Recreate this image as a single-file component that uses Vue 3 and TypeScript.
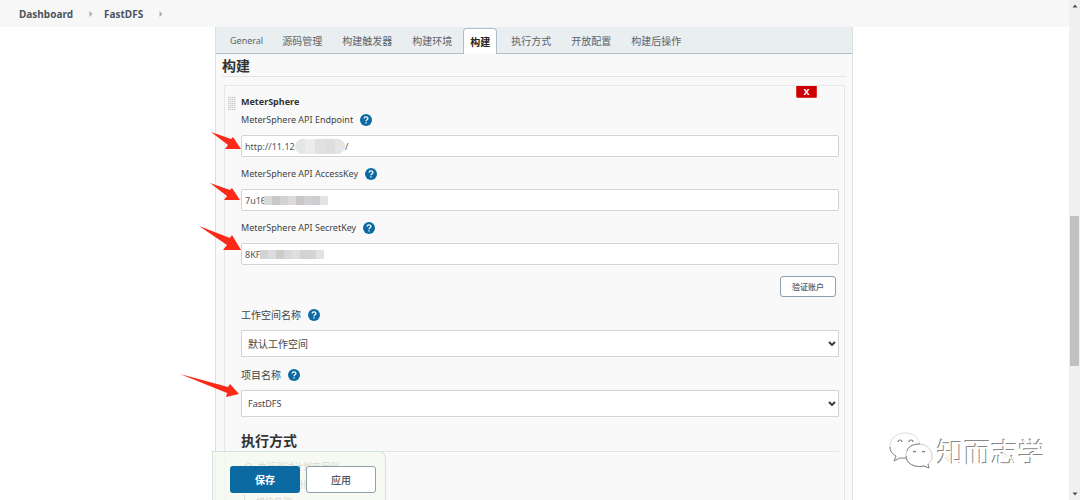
<script setup lang="ts">
import { ref } from 'vue'

interface Tab { label: string; kind?: string }
interface Credential { id: string; label: string; value: string; blocks: string[]; tail: string }

const crumbs: string[] = ['Dashboard', 'FastDFS']

const tabs: Tab[] = [
  { label: 'General', kind: 'latin' },
  { label: '源码管理' },
  { label: '构建触发器' },
  { label: '构建环境' },
  { label: '构建', kind: 'active' },
  { label: '执行方式' },
  { label: '开放配置' },
  { label: '构建后操作' },
]

const credentials = ref<Credential[]>([
  { id: 'endpoint', label: 'MeterSphere API Endpoint', value: 'http://11.12', tail: '/', blocks: ['#e6e6e6', '#ececec', '#e2e0e0', '#dedede', '#e5e5e6'] },
  { id: 'access', label: 'MeterSphere API AccessKey', value: '7u16', tail: '', blocks: ['#d9d9dc', '#c9c7c8', '#d0d2d6', '#dedad9', '#c9c6c8', '#d2d0d4', '#cecdcf', '#e3e3e6'] },
  { id: 'secret', label: 'MeterSphere API SecretKey', value: '8KF', tail: '', blocks: ['#d3d3d3', '#dcdcdf', '#cfcbc9', '#d8d8dc', '#dedede', '#d2d4d4', '#d6d3d6', '#e2e2e6'] },
])

const workspace = ref('默认工作空间')
const project = ref('FastDFS')
const mode = ref('')
</script>

<template>
  <div class="screen">
    <div class="page">
      <nav class="crumbs">
        <template v-for="c in crumbs" :key="c">
          <a href="#" class="crumb">{{ c }}</a>
          <svg class="sep" viewBox="0 0 4 6"><path d="M0.5 0 3.5 3 0.5 6Z" fill="#a9adb0" /></svg>
        </template>
      </nav>

      <main class="panel">
        <nav class="tabs">
          <a v-for="t in tabs" :key="t.label" href="#" class="tab" :class="t.kind">{{ t.label }}</a>
        </nav>

        <div class="body">
          <h2 class="heading">构建</h2>

          <section class="step">
            <span class="grip"></span>
            <button type="button" class="remove">X</button>
            <h3 class="title">MeterSphere</h3>

            <div v-for="f in credentials" :key="f.id" class="field">
              <div class="caption">
                <label :for="f.id">{{ f.label }}</label>
                <button type="button" class="help" aria-label="?"><svg viewBox="0 0 12 12"><circle cx="6" cy="6" r="6" fill="#0b6aa2" /><path d="M4.1 4.6C4.1 2.3 7.9 2.3 7.9 4.5 7.9 5.8 6 5.8 6 7.2M6 8.3V9.5" fill="none" stroke="#fff" stroke-width="1.3" /></svg></button>
              </div>
              <div class="control">
                <input :id="f.id" v-model="f.value" type="text" class="text" />
                <span class="mask" :class="f.id">
                  <span class="mosaic"><i v-for="(b, n) in f.blocks" :key="n" :style="{ background: b }"></i></span>
                  <span v-if="f.tail" class="tail">{{ f.tail }}</span>
                </span>
                <svg v-if="f.id === 'secret'" class="arrow to-secret" viewBox="0 0 42 25"><path d="M0 0 31 12 33 9 42 24 24 24 28 19Z" fill="#fc2818" /></svg>
                <svg v-else class="arrow" :class="'to-' + f.id" viewBox="0 0 30 18"><path d="M0 0 20 7 22 5 30 17 14 17 17 13Z" fill="#fc2818" /></svg>
              </div>
            </div>

            <div class="verify">
              <button type="button" class="outline small">验证账户</button>
            </div>

            <div class="field choose">
              <div class="caption">
                <label for="workspace">工作空间名称</label>
                <button type="button" class="help" aria-label="?"><svg viewBox="0 0 12 12"><circle cx="6" cy="6" r="6" fill="#0b6aa2" /><path d="M4.1 4.6C4.1 2.3 7.9 2.3 7.9 4.5 7.9 5.8 6 5.8 6 7.2M6 8.3V9.5" fill="none" stroke="#fff" stroke-width="1.3" /></svg></button>
              </div>
              <div class="control">
                <select id="workspace" v-model="workspace" class="select"><option>默认工作空间</option></select>
                <svg class="chevron" viewBox="0 0 8 6"><path d="M1 1 4 4 7 1" fill="none" stroke="#333" stroke-width="1.8" /></svg>
              </div>
            </div>

            <div class="field choose">
              <div class="caption">
                <label for="project">项目名称</label>
                <button type="button" class="help" aria-label="?"><svg viewBox="0 0 12 12"><circle cx="6" cy="6" r="6" fill="#0b6aa2" /><path d="M4.1 4.6C4.1 2.3 7.9 2.3 7.9 4.5 7.9 5.8 6 5.8 6 7.2M6 8.3V9.5" fill="none" stroke="#fff" stroke-width="1.3" /></svg></button>
              </div>
              <div class="control">
                <select id="project" v-model="project" class="select"><option>FastDFS</option></select>
                <svg class="chevron" viewBox="0 0 8 6"><path d="M1 1 4 4 7 1" fill="none" stroke="#333" stroke-width="1.8" /></svg>
                <svg class="arrow to-project" viewBox="0 0 59 23"><path d="M0 0 48 13 50 10 59 20 46 23 47 19Z" fill="#fc2818" /></svg>
              </div>
            </div>

            <h2 class="heading sub">执行方式</h2>
            <label class="choice"><input v-model="mode" type="radio" name="mode" value="plan" />执行测试计划定用例</label>
            <label class="choice"><input v-model="mode" type="radio" name="mode" value="module" />执行模块用例</label>
            <div class="nested">模块名称</div>
          </section>
        </div>
      </main>

      <div class="actions">
        <button type="button" class="primary">保存</button>
        <button type="button" class="outline">应用</button>
      </div>

      <div class="watermark">
        <svg class="wechat" viewBox="0 0 44 38">
          <g fill="#fff" stroke-width="1">
            <path d="M16 1C7 1 1 7 1 14c0 5 2 8 6 10l-2 5 6-3c9 2 20-2 20-12C31 6 24 1 16 1Z" stroke="#dcdcdc" />
            <path d="M1 15c0 4 2 7 6 9l-2 5 6-3 6 0" stroke="#8c8c8c" fill="none" />
            <path d="M30 12c-8 0-13 5-13 11 0 9 9 13 18 11l5 2-1-4c3-2 4-5 4-8 0-7-6-12-13-12Z" stroke="#cfcfcf" />
            <path d="M17 24c0 8 9 12 18 10l5 2-1-4M31 12c-8 0-12 3-13 7" stroke="#858585" fill="none" />
          </g>
          <path d="M9 10a2 2 0 0 1 4 0M20 10a2 2 0 0 1 4 0M24 20a2 2 0 0 1 3 0M33 20a2 2 0 0 1 3 0" fill="none" stroke="#808080" stroke-width="1.2" />
        </svg>
        <span class="brand">知而志学</span>
      </div>
    </div>

    <div class="scrollbar">
      <svg viewBox="0 0 6 4"><path d="M0.5 3.5 3 0.5 5.5 3.5Z" fill="#505050" /></svg>
      <div class="track"><div class="thumb"></div></div>
      <svg viewBox="0 0 6 4"><path d="M0.5 0.5 3 3.5 5.5 0.5Z" fill="#505050" /></svg>
    </div>
  </div>
</template>

<style>
body { margin: 0; }
</style>

<style scoped>
* { box-sizing: border-box; }
.screen {
  display: flex;
  height: 100vh;
  overflow: hidden;
  background: #fff;
  color: #444;
  font: 9px/16px "Noto Sans", "Noto Sans CJK SC", sans-serif;
}
button, input, select { font: inherit; color: inherit; margin: 0; }
.page { position: relative; flex: 1; min-width: 0; display: flex; flex-direction: column; overflow: hidden; }
.crumbs { flex: none; display: flex; align-items: center; height: 27px; padding-left: 19px; background: #f7f7f7; }
.crumb { color: #4d545d; font-size: 10px; font-weight: 700; text-decoration: none; }
.sep { width: 4px; height: 6px; margin: 0 11px 0 16px; }

.panel { flex: 1 0 auto; margin: 0 216px 0 215px; border: solid #dcdfe1; border-width: 0 1px; background: #f9f9f9; }
.tabs { display: flex; align-items: flex-end; height: 27px; padding-left: 4px; background: #e9eef1; border-bottom: 1px solid #b0bec8; }
.tab { height: 26px; padding: 0 10px; line-height: 28px; color: #5d6368; font-size: 10px; text-decoration: none; white-space: nowrap; }
.tab.latin { padding-right: 9px; font-size: 9px; }
.tab.active { margin: 0 4px -1px 1px; padding: 0 6px; line-height: 26px; color: #222; font-weight: 700; background: #fff; border: 1px solid #b0bec8; border-bottom: 0; border-radius: 4px 4px 0 0; }

.body { padding: 0 6px; }
.heading { margin: 0; padding-top: 2px; border-bottom: 1px solid #e3e4e5; color: #333; font-size: 14px; line-height: 20px; font-weight: 700; }
.step { position: relative; margin: 8px 1px 0 2px; padding: 8px 5px 0 16px; border: 1px solid #e6e7e8; border-bottom: 0; }
.grip { position: absolute; left: 3px; top: 10px; width: 8px; height: 14px; background: repeating-linear-gradient(#f0f0f0 0 1px, transparent 1px 2px), repeating-linear-gradient(90deg, #c8c8c8 0 1px, #e8e8e8 1px 2px); }
.remove { position: absolute; right: 27px; top: 0; width: 21px; height: 12px; padding: 0; border: 1px solid #d33; border-top: 0; border-radius: 0 0 2px 2px; background: #c00; color: #fff; font-size: 9px; line-height: 11px; font-weight: 700; }
.title { margin: 0 0 2px; color: #333; font-size: 9px; line-height: 16px; font-weight: 700; }
.field { margin-bottom: 9px; }
.caption { display: flex; align-items: center; gap: 7px; height: 16px; margin-bottom: 7px; }
.help { width: 12px; height: 12px; padding: 0; border: 0; background: none; }
.help svg { display: block; width: 12px; height: 12px; }
.control { position: relative; }
.text { display: block; width: 100%; height: 22px; padding: 0 3px; border: 1px solid #d2d4d6; border-radius: 2px; background: #fff; color: #555; }
.mask { position: absolute; top: 4px; display: flex; align-items: center; height: 15px; pointer-events: none; }
.mask.endpoint { left: 54px; }
.mask.access { left: 23px; }
.mask.secret { left: 19px; }
.mosaic { display: flex; height: 9px; }
.mosaic i { width: 8px; }
.endpoint .mosaic { height: 15px; border-radius: 8px; overflow: hidden; }
.endpoint .mosaic i { width: 10px; }
.tail { color: #555; }
.arrow { position: absolute; overflow: visible; }
.to-endpoint { width: 30px; height: 18px; left: -30px; top: -3px; }
.to-access { width: 30px; height: 18px; left: -31px; top: -6px; }
.to-secret { width: 42px; height: 25px; left: -42px; top: -17px; }
.to-project { width: 59px; height: 23px; left: -61px; top: -16px; }
.verify { display: flex; justify-content: flex-end; margin: 11px 3px 10px 0; }
.outline { width: 70px; height: 27px; padding: 0; border: 1px solid #8f9fac; border-radius: 3px; background: #fff; color: #4d545d; font-size: 10px; font-weight: 500; }
.outline.small { width: 56px; height: 21px; font-size: 8px; line-height: 16px; }
.select { display: block; width: 100%; height: 27px; padding: 0 6px; border: 1px solid #d2d4d6; border-radius: 0; background: #fff; color: #444; appearance: none; }
#workspace, .choose label { font-size: 10px; }
.choose { margin-bottom: 10px; }
.chevron { position: absolute; right: 3px; top: 11px; width: 8px; height: 6px; pointer-events: none; }
.heading.sub { margin-top: 12px; }
.choice { display: flex; align-items: center; gap: 5px; height: 18px; margin: 6px 0 0 3px; color: #777; font-size: 9px; }
.choice + .choice { margin-top: 0; }
.choice input { width: 9px; height: 9px; }
.nested { margin: 0 0 0 3px; padding-left: 11px; border-left: 1px solid #999; color: #777; }

.actions { position: absolute; left: 212px; bottom: 0; display: flex; gap: 6px; height: 49px; padding: 14px 9px 0 17px; border: 1px solid #d2e2d8; border-bottom: 0; border-radius: 0 7px 0 0; background: rgba(246, 250, 240, 0.75); }
.primary { width: 70px; height: 27px; padding: 0; border: 0; border-radius: 3px; background: #0b6aa2; color: #fff; font-size: 10px; font-weight: 700; }
.watermark { position: absolute; right: 24px; bottom: 29px; display: flex; align-items: center; gap: 4px; }
.wechat { width: 44px; height: 38px; }
.brand { padding-top: 4px; color: #fff; font-size: 27px; line-height: 36px; text-shadow: -1px -1px 0 #888; }

.scrollbar { flex: none; display: flex; flex-direction: column; align-items: center; width: 11px; padding: 4px 0; background: #f0f0f0; }
.scrollbar svg { width: 6px; height: 4px; }
.track { flex: 1; width: 9px; }
.thumb { height: 31%; margin-top: 208px; background: #c1c1c1; }
</style>
